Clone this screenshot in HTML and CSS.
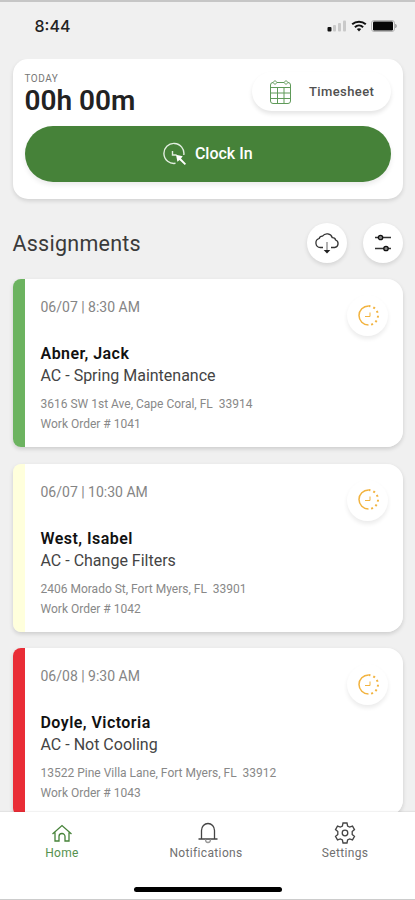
FILE: index.html
```html
<!DOCTYPE html>
<html lang="en">
<head>
  <meta charset="UTF-8" />
  <title>Assignments</title>
  <meta name="viewport" content="width=device-width, initial-scale=1.0" />
  <link rel="stylesheet" href="styles.css">
</head>

<body>
  <!-- shared clock icon for the assignment cards -->
  <svg class="defs" width="0" height="0">
    <symbol id="pending" viewBox="0 0 24 24">
      <path d="M12.500 2a9.500 9.500 0 0 0 0 19" />
      <path class="dots" d="M12.500 2a9.500 9.500 0 0 1 0 19" />
      <path class="hands" d="M14 8.500v4H9" />
    </symbol>
  </svg>

  <div class="screen">
    <header class="status">
      <span class="time">8:44</span>
      <div class="status-icons">
        <svg width="20" height="12" viewBox="0 0 20 12">
          <rect x="0.5" y="7" width="4" height="4.5" rx="1" fill="#111" />
          <rect x="6" y="5" width="3" height="6.5" rx="1" fill="#c9c9c9" />
          <rect x="11" y="3" width="3" height="8.5" rx="1" fill="#c9c9c9" />
          <rect x="16" y="0.5" width="3" height="11" rx="1" fill="#c9c9c9" />
        </svg>
        <svg width="16" height="12" viewBox="0 0 16 12">
          <path d="M1.2 4.3a10 10 0 0 1 13.6 0M3.9 7.2a6 6 0 0 1 8.2 0" fill="none" stroke="#111" stroke-width="2" />
          <path d="M5.8 9.1a3.4 3.4 0 0 1 4.4 0L8 11.6z" fill="#111" />
        </svg>
        <svg width="27" height="12" viewBox="0 0 27 12">
          <rect x="0.5" y="0.5" width="23" height="11" rx="2.5" fill="none" stroke="#b5b5b5" />
          <rect x="2" y="1.5" width="20" height="9" rx="1.2" fill="#050505" />
          <path d="M24.5 4q2 2 0 4z" fill="#aaa" stroke="#aaa" />
        </svg>
      </div>
    </header>

    <main class="content">
      <section class="today">
        <div class="today-top">
          <div>
            <div class="label">TODAY</div>
            <div class="total">00h 00m</div>
          </div>
          <button class="timesheet">
            <svg width="23" height="26" viewBox="0 0 23 26">
              <rect x="1.5" y="3.5" width="20" height="21" rx="2.5" />
              <path d="M1.500 8.500h20M1.500 14h20M1.500 19.500h20M8.500 8.500v16M15 8.500v16M8 3.500h7" />
              <path class="ring" d="M4 3.500 6 1.500l2 2-2 2zM15 3.500l2-2 2 2-2 2z" />
            </svg>
            <span>Timesheet</span>
          </button>
        </div>
        <button class="clock-in">
          <svg width="24" height="24" viewBox="0 0 24 24">
            <path d="M20.800 13A10 10 0 1 0 12.500 21.300" />
            <path d="M9.500 9v4h4" />
            <path class="pointer" d="M13 12.700l6.700 1.600-1.700 2.200 5 5.300-1.200 1.200-5.300-5-2.100 1.800z" />
          </svg>
          <span>Clock In</span>
        </button>
      </section>

      <div class="heading">
        <h1>Assignments</h1>
        <div class="actions">
          <button class="round">
            <svg width="26" height="24" viewBox="0 0 26 24">
              <path d="M9 16.500H6.300a4.600 4.600 0 0 1-1.100-9C5.700 5.800 7 5 8.500 5.100a5.600 5.600 0 0 1 9.800 1.600c2-.1 3 .9 3.300 2.300A3.900 3.900 0 0 1 20.600 16.500H17" />
              <path class="stem" d="M13 11V21" />
              <path class="head" d="M9.700 19h6.600L13 22.500z" />
            </svg>
          </button>
          <button class="round">
            <svg width="18" height="18" viewBox="0 0 18 18">
              <path d="M1 3.500h16M1 14.500h16" />
              <circle cx="6.500" cy="3.500" r="2.200" />
              <circle cx="12" cy="14.500" r="2.200" />
            </svg>
          </button>
        </div>
      </div>

      <div class="list">
        <article class="job green">
          <div class="when">06/07 | 8:30 AM</div>
          <h2>Abner, Jack</h2>
          <div class="task">AC - Spring Maintenance</div>
          <div class="address">3616 SW 1st Ave, Cape Coral, FL&nbsp; 33914</div>
          <div class="order">Work Order # 1041</div>
          <span class="badge"><svg width="24" height="24"><use href="#pending" /></svg></span>
        </article>

        <article class="job yellow">
          <div class="when">06/07 | 10:30 AM</div>
          <h2>West, Isabel</h2>
          <div class="task">AC - Change Filters</div>
          <div class="address">2406 Morado St, Fort Myers, FL&nbsp; 33901</div>
          <div class="order">Work Order # 1042</div>
          <span class="badge"><svg width="24" height="24"><use href="#pending" /></svg></span>
        </article>

        <article class="job red">
          <div class="when">06/08 | 9:30 AM</div>
          <h2>Doyle, Victoria</h2>
          <div class="task">AC - Not Cooling</div>
          <div class="address">13522 Pine Villa Lane, Fort Myers, FL&nbsp; 33912</div>
          <div class="order">Work Order # 1043</div>
          <span class="badge"><svg width="24" height="24"><use href="#pending" /></svg></span>
        </article>
      </div>
    </main>

    <footer class="bottom">
      <nav class="tabs">
        <a class="tab active">
          <svg width="22" height="22" viewBox="0 0 22 22">
            <path d="M1.500 12 11 3.500l9.500 8.500M4 10.500v8.500h4v-4.500a3 3 0 0 1 6 0v4.500h4V10.500" />
          </svg>
          <span>Home</span>
        </a>
        <a class="tab">
          <svg class="bell" width="22" height="22" viewBox="0 0 22 22">
            <path d="M1.500 17h19M4.500 17V8.500a6.500 7 0 0 1 13 0V17" />
            <path class="clapper" d="M8.500 17.500a2.500 3 0 0 0 5 0" />
          </svg>
          <span>Notifications</span>
        </a>
        <a class="tab">
          <svg width="22" height="22" viewBox="0 0 22 22">
            <path d="M9 1h4l.6 3 2 1.100 2.900-1 2 3.500-2.300 2v2.800l2.300 2-2 3.500-2.900-1-2 1.100-.6 3H9l-.6-3-2-1.100-2.900 1-2-3.500 2.300-2V9.600l-2.300-2 2-3.500 2.900 1 2-1.100z" />
            <circle cx="11" cy="11" r="2.8" />
          </svg>
          <span>Settings</span>
        </a>
      </nav>
      <div class="home-bar"></div>
    </footer>
  </div>
</body>
</html>
```
FILE: styles.css
```css
* {
  box-sizing: border-box;
}

body {
  margin: 0;
  font-family: Roboto, sans-serif;
  background: #f0f0f0;
  color: #222;
}

h1, h2 {
  margin: 0;
}

button {
  border: none;
  padding: 0;
  font-family: inherit;
  background: #fff;
  cursor: pointer;
}

svg {
  display: block;
  fill: none;
  flex-shrink: 0;
}

.defs {
  position: absolute;
}

.screen {
  display: flex;
  flex-direction: column;
  height: 900px;
  border-top: 2px solid #c6c6c6;
  border-bottom: 1px solid #ccc;
  overflow: hidden;
}

.status {
  display: flex;
  justify-content: space-between;
  height: 57px;
  padding: 14px 17px 0 34.5px;
}

.time {
  font-family: Inter, sans-serif;
  font-size: 16px;
  font-weight: 500;
  line-height: 20px;
}

.status-icons {
  display: flex;
  gap: 4px;
  padding-top: 4px;
}

.content {
  flex: 1;
  min-height: 0;
  padding: 0 12px 0 12.5px;
  overflow: hidden;
}

.today {
  height: 139.5px;
  padding: 13px 12px 0;
  border-radius: 15px;
  background: #fff;
  box-shadow: 0 2px 4px rgba(0, 0, 0, 0.13);
}

.today-top {
  display: flex;
  justify-content: space-between;
  height: 53.5px;
}

.label {
  font-size: 10px;
  line-height: 13px;
  letter-spacing: 0.5px;
  color: #777;
}

.total {
  font-size: 28px;
  font-weight: 600;
  line-height: 32px;
}

.timesheet {
  display: flex;
  align-items: center;
  gap: 17px;
  width: 139px;
  height: 39px;
  padding-left: 17px;
  border-radius: 20px;
  box-shadow: 0 3px 4px rgba(0, 0, 0, 0.1);
  font-size: 13px;
  font-weight: 500;
  letter-spacing: 0.4px;
  color: #505050;
}

.timesheet svg {
  stroke: #5f9a59;
}

.timesheet .ring {
  fill: #fff;
}

.clock-in {
  display: flex;
  align-items: center;
  justify-content: center;
  gap: 8px;
  width: 100%;
  height: 56px;
  border-radius: 28px;
  background: #468239;
  box-shadow: 0 3px 5px rgba(0, 0, 0, 0.08);
  font-size: 16px;
  font-weight: 500;
  color: #fff;
}

.clock-in svg {
  stroke: #e2eee0;
  stroke-width: 1.4;
}

.clock-in .pointer {
  fill: #fff;
  stroke: none;
}

.heading {
  display: flex;
  align-items: center;
  justify-content: space-between;
  height: 80.5px;
  padding-top: 9px;
}

.heading h1 {
  font-size: 21.5px;
  font-weight: 400;
  letter-spacing: 0.25px;
  color: #3a3a3a;
}

.actions {
  display: flex;
  gap: 16px;
}

.round {
  display: flex;
  align-items: center;
  justify-content: center;
  width: 40px;
  height: 40px;
  border-radius: 50%;
  box-shadow: 0 2px 4px rgba(0, 0, 0, 0.12);
}

.round svg {
  stroke: #333;
  stroke-width: 1.3;
}

.round circle {
  fill: #888;
  stroke: #111;
}

.round .stem {
  stroke: #888;
}

.round .head {
  fill: #222;
  stroke: none;
}

.list {
  display: flex;
  flex-direction: column;
  gap: 16.5px;
}

.job {
  position: relative;
  flex-shrink: 0;
  height: 168px;
  padding: 19px 0 0 28px;
  border-radius: 8px 16px 16px 8px;
  background: linear-gradient(to right, var(--stripe) 12.5px, #fff 12.5px);
  box-shadow: 0 2px 4px rgba(0, 0, 0, 0.15);
}

.green {
  --stripe: #6cb360;
}

.yellow {
  --stripe: #ffffdc;
}

.red {
  --stripe: #e92d36;
}

.when {
  font-size: 14px;
  line-height: 19px;
  color: #858585;
}

.job h2 {
  margin-top: 26px;
  font-size: 16px;
  font-weight: 600;
  line-height: 22px;
  letter-spacing: 0.45px;
  color: #111;
}

.task {
  font-size: 16px;
  line-height: 22px;
  color: #444;
}

.address, .order {
  font-size: 12px;
  line-height: 20px;
  color: #888;
}

.address {
  margin-top: 7px;
}

.badge {
  position: absolute;
  top: 16px;
  right: 15px;
  display: flex;
  align-items: center;
  justify-content: center;
  width: 41px;
  height: 41px;
  border-radius: 50%;
  background: #fff;
  box-shadow: 0 3px 4px rgba(0, 0, 0, 0.08);
}

.badge svg {
  stroke: #f2b33f;
  stroke-width: 1.5;
}

.dots {
  stroke-width: 2;
  stroke-dasharray: 2 3;
}

.hands {
  stroke-width: 1;
}

.bottom {
  height: 87px;
  padding-top: 10px;
  background: #fff;
  box-shadow: 0 -1px 1px rgba(0, 0, 0, 0.05);
  z-index: 1;
}

.tabs {
  display: flex;
  justify-content: space-between;
  height: 65px;
  padding: 0 20px 0 12px;
}

.tab {
  display: flex;
  flex-direction: column;
  align-items: center;
  gap: 2px;
  width: 100px;
  font-size: 12px;
  line-height: 15px;
  letter-spacing: 0.35px;
  color: #707070;
}

.tab:nth-child(2) {
  width: 105px;
  margin-left: 5px;
}

.tab svg {
  stroke: #444;
  stroke-width: 1.3;
}

.tab .bell {
  margin-left: 3px;
}

.tab .clapper {
  stroke: #999;
}

.tab.active {
  color: #56914e;
}

.active svg {
  stroke: #468239;
}

.home-bar {
  width: 148px;
  height: 5px;
  margin: 0 auto;
  border-radius: 3px;
  background: #000;
}
```
